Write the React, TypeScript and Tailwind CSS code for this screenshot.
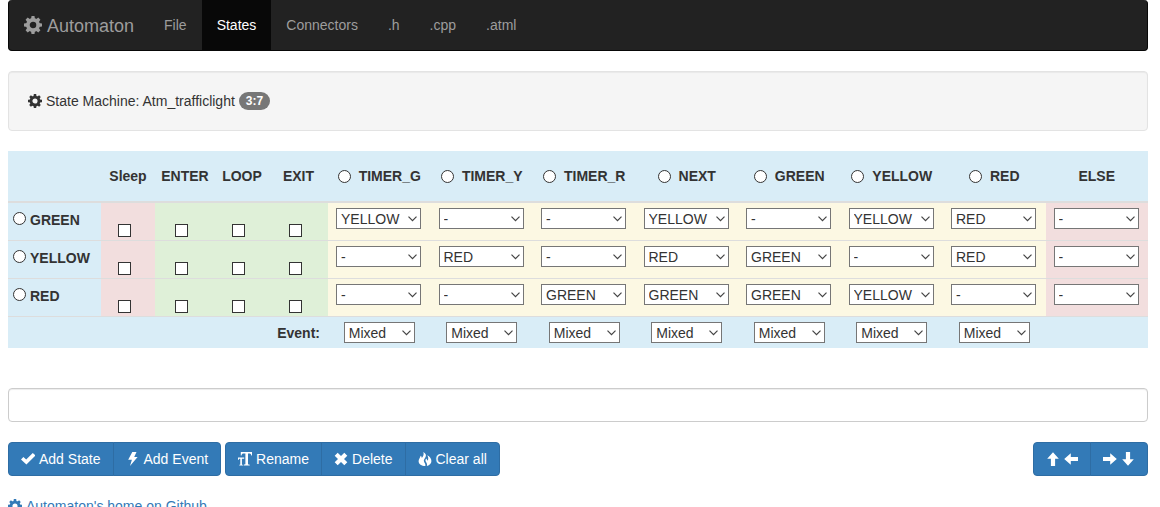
import type { ReactNode } from "react";

type IconProps = { className?: string };

const TEETH = [0, 45, 90, 135, 180, 225, 270, 315];

function Cog({ className = "size-3.5" }: IconProps) {
  return (
    <svg viewBox="0 0 24 24" className={`shrink-0 ${className}`} aria-hidden="true">
      <circle cx="12" cy="12" r="6.8" fill="none" stroke="currentColor" strokeWidth="4.8" />
      {TEETH.map((a) => (
        <path key={a} d="M9.300 4.500 10 0h4l.7 4.500z" fill="currentColor" transform={`rotate(${a} 12 12)`} />
      ))}
    </svg>
  );
}

function Glyph({ children }: { children: ReactNode }) {
  return (
    <svg viewBox="0 0 14 14" className="size-3.5 shrink-0" fill="currentColor" aria-hidden="true">
      {children}
    </svg>
  );
}

const Check = () => (
  <Glyph>
    <path d="M0 7.600 2.400 4.900 5.200 7.400 11.800 1 14.400 3.500 5.400 12.400z" />
  </Glyph>
);
const Flash = () => (
  <Glyph>
    <path d="M6.300 0h4.200L8.200 4.900h3.400L4 14l1.900-6.200H2.200z" />
  </Glyph>
);
const TextSize = () => (
  <Glyph>
    <path d="M2.800 0H14v3.500h-.7c-.3-1.400-.9-2-2-2H10v10.300c0 .6.400.8 1.700.9v.8H5.700v-.8c1.300-.1 1.700-.3 1.700-.9V1.500H5.600c-1.200 0-1.800.6-2.100 2h-.7z" />
    <path d="M0 5.600h6.200v1.200H3.900v5.100c0 .6.300.8 1 .8v.8H1.300v-.8c.7 0 1-.2 1-.8V6.800H1.600c-.600 0-.900.4-1 1.300H0z" />
  </Glyph>
);
const Remove = () => (
  <Glyph>
    <path d="M3.700.7 7 4 10.300.7 13.300 3.700 10 7l3.300 3.300-3 3L7 10l-3.300 3.300-3-3L4 7 .7 3.700z" />
  </Glyph>
);
const Fire = () => (
  <Glyph>
    <path d="M5.300 0C8 1.400 8.600 3.400 7.300 5.500 6.200 7.100 5.400 8.300 6.100 9.800 6.600 11 7.600 12 7.400 14 3.500 14 .6 12.100.6 9.200.6 7 2.200 5.600 2.700 3.700c.8.6 1.100 1.400 1.100 2.300C5.300 4.400 6.200 2.400 5.300 0z" />
    <path d="M9.200 3.200c2.600 1.300 4.200 3.400 4.200 5.900 0 2.400-1.600 4.200-4.500 4.900.5-1.800-.2-3-1-4.200-.8-1.200-.4-2.200.4-3.300.3.900.9 1.300 1.300 2.200C10.600 7 10.500 5 9.200 3.200z" />
  </Glyph>
);
const Arrow = ({ turn }: { turn: number }) => (
  <Glyph>
    <path d="M7 .2 12.800 6.800H9.100V14H4.900V6.800H1.200z" transform={`rotate(${turn} 7 7)`} />
  </Glyph>
);

function Chevron() {
  return (
    <svg
      viewBox="0 0 9 6"
      className="pointer-events-none absolute top-2 right-1 h-1.5 w-[9px]"
      fill="none"
      stroke="#444"
      strokeWidth="1.2"
      aria-hidden="true"
    >
      <path d="M.5.7l4 4 4-4" />
    </svg>
  );
}

function Picker({ label, value, options, width }: { label: string; value: string; options: string[]; width: string }) {
  return (
    <span className={`relative inline-block align-top ${width}`}>
      <select
        aria-label={label}
        defaultValue={value}
        className="block h-[21px] w-full appearance-none border border-[#767676] bg-white pt-0.5 pl-1 text-sm leading-[17px] text-[#333]"
      >
        {options.map((o) => (
          <option key={o}>{o}</option>
        ))}
      </select>
      <Chevron />
    </span>
  );
}

const RADIO =
  "size-[13px] shrink-0 appearance-none rounded-full border border-[#333] bg-white checked:border-4";
const BOX = "block size-[13px] appearance-none border border-[#333] bg-white checked:bg-[#333]";

const TABS = ["File", "States", "Connectors", ".h", ".cpp", ".atml"];
const FLAGS = ["Sleep", "ENTER", "LOOP", "EXIT"];
const EVENTS = ["TIMER_G", "TIMER_Y", "TIMER_R", "NEXT", "GREEN", "YELLOW", "RED"];
const TARGETS = ["-", "GREEN", "YELLOW", "RED"];
const ROWS = [
  { name: "GREEN", next: ["YELLOW", "-", "-", "YELLOW", "-", "YELLOW", "RED", "-"] },
  { name: "YELLOW", next: ["-", "RED", "-", "RED", "GREEN", "-", "RED", "-"] },
  { name: "RED", next: ["-", "-", "GREEN", "GREEN", "GREEN", "YELLOW", "-", "-"] },
];

function StateTable() {
  return (
    <table className="mt-5 w-full table-fixed border-separate border-spacing-0">
      <colgroup>
        <col className="w-[93px]" />
        <col className="w-[54px]" />
        <col className="w-[60px]" />
        <col className="w-[54px]" />
        <col className="w-[59px]" />
        {EVENTS.map((e) => (
          <col key={e} />
        ))}
        <col />
      </colgroup>
      <thead>
        <tr className="h-[52px] bg-[#d9edf7]">
          <td className="border-b-2 border-[#ddd]" />
          {FLAGS.map((f) => (
            <th key={f} scope="col" className="border-b-2 border-[#ddd] p-0 text-center">
              {f}
            </th>
          ))}
          {EVENTS.map((e) => (
            <th key={e} scope="col" className="border-b-2 border-[#ddd] p-0">
              <label className="flex items-center justify-center gap-2">
                <input type="radio" name="selection" className={RADIO} />
                {e}
              </label>
            </th>
          ))}
          <th scope="col" className="border-b-2 border-[#ddd] p-0 text-center">
            ELSE
          </th>
        </tr>
      </thead>
      <tbody>
        {ROWS.map((row) => (
          <tr key={row.name} className="h-[38px] align-top">
            <th scope="row" className="border-b border-[#ddd] bg-[#d9edf7] pt-[7px] pl-[5px] text-left">
              <label className="flex items-start gap-1">
                <input type="radio" name="selection" className={`mt-0.5 ${RADIO}`} />
                {row.name}
              </label>
            </th>
            {FLAGS.map((f) => (
              <td
                key={f}
                className={`border-b border-[#ddd] pt-[21px] pr-[7px] ${f === "Sleep" ? "bg-[#f2dede]" : "bg-[#dff0d8]"}`}
              >
                <input type="checkbox" aria-label={`${row.name} ${f}`} className={`mx-auto ${BOX}`} />
              </td>
            ))}
            {row.next.map((target, i) => (
              <td
                key={i}
                className={`border-b border-[#ddd] pt-[5px] pl-2 ${i === 7 ? "bg-[#f2dede]" : "bg-[#fcf8e3]"}`}
              >
                <Picker
                  label={`${row.name} on ${EVENTS[i] ?? "ELSE"}`}
                  value={target}
                  options={TARGETS}
                  width="w-[85px]"
                />
              </td>
            ))}
          </tr>
        ))}
      </tbody>
      <tfoot>
        <tr className="bg-[#d9edf7]">
          <th scope="row" colSpan={5} className="pr-2 text-right">
            Event:
          </th>
          {EVENTS.map((e) => (
            <td key={e} className="py-[5px] text-center">
              <Picker
                label={`${e} event type`}
                value="Mixed"
                options={["Mixed", "Auto", "Manual"]}
                width="w-[71px] text-left"
              />
            </td>
          ))}
          <td />
        </tr>
      </tfoot>
    </table>
  );
}

function Button({ children, label }: { children: ReactNode; label?: string }) {
  return (
    <button
      type="button"
      aria-label={label}
      className="-ml-px flex h-[34px] items-center gap-1 border border-[#2e6da4] bg-[#337ab7] px-3 text-white first:ml-0 first:rounded-l last:rounded-r hover:bg-[#286090]"
    >
      {children}
    </button>
  );
}

export default function App() {
  return (
    <div className="h-screen overflow-hidden bg-white pr-3 pl-2 font-['Liberation_Sans',Arial,sans-serif] text-sm leading-5 text-[#333]">
      <nav className="flex rounded border-x border-b border-[#080808] bg-[#222] text-[#9d9d9d]">
        <a href="#home" className="flex h-[50px] items-center gap-[5px] px-[15px] text-lg">
          <Cog className="size-[18px]" />
          <span className="pt-0.5">Automaton</span>
        </a>
        {TABS.map((t) => (
          <a
            key={t}
            href={`#${t}`}
            className={`flex h-[50px] items-center px-[15px] ${t === "States" ? "bg-[#080808] text-white" : ""}`}
          >
            {t}
          </a>
        ))}
      </nav>

      <header className="mt-5 flex items-center gap-1 rounded border border-[#e3e3e3] bg-[#f5f5f5] p-[19px] shadow-[inset_0_1px_1px_rgba(0,0,0,0.05)]">
        <Cog />
        <span>State Machine: Atm_trafficlight</span>
        <span className="rounded-full bg-[#777] px-[7px] text-xs leading-[18px] font-bold text-white">3:7</span>
      </header>

      <main>
        <StateTable />

        <input
          type="text"
          aria-label="Name"
          className="mt-10 block h-[34px] w-full rounded border border-[#ccc] px-3 shadow-[inset_0_1px_1px_rgba(0,0,0,0.075)]"
        />

        <div className="mt-5 flex gap-1">
          <div className="flex">
            <Button>
              <Check />
              Add State
            </Button>
            <Button>
              <Flash />
              Add Event
            </Button>
          </div>
          <div className="flex">
            <Button>
              <TextSize />
              Rename
            </Button>
            <Button>
              <Remove />
              Delete
            </Button>
            <Button>
              <Fire />
              Clear all
            </Button>
          </div>
          <div className="ml-auto flex">
            <Button label="Move up or left">
              <Arrow turn={0} />
              <Arrow turn={270} />
            </Button>
            <Button label="Move right or down">
              <Arrow turn={90} />
              <Arrow turn={180} />
            </Button>
          </div>
        </div>
      </main>

      <footer className="mt-5">
        <a href="#github" className="inline-flex items-center gap-1 text-[#337ab7]">
          <Cog />
          Automaton's home on Github
        </a>
      </footer>
    </div>
  );
}
